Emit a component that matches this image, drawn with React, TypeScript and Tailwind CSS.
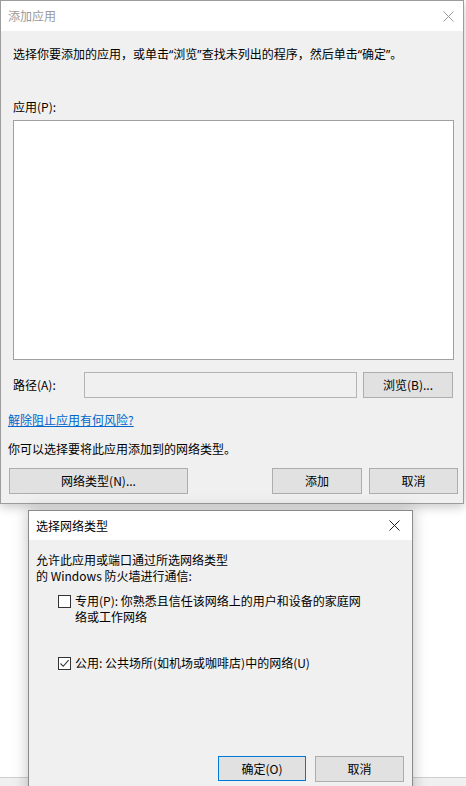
import React from 'react';

const font = "font-['Microsoft_YaHei','Noto_Sans_CJK_SC',sans-serif]";

// thin "×" used in the caption bars
const CloseGlyph = ({ color }: { color: string }) => (
    <svg width="11" height="11" viewBox="0 0 11 11">
        <path d="M0.5 0.5 L10.5 10.5 M10.5 0.5 L0.5 10.5" stroke={color} strokeWidth="1" fill="none" />
    </svg>
);

// curly quotes set in a latin face so they stay narrow
const Q = ({ children }: { children: React.ReactNode }) => (
    <span className="font-['Noto_Sans',sans-serif]">{children}</span>
);

const Button = ({ label, className = '' }: { label: string; className?: string }) => (
    <button className={`h-[26px] bg-[#e1e1e1] border border-[#adadad] text-[12px] leading-[16px] text-black ${className}`}>
        {label}
    </button>
);

const CheckBox = ({ checked }: { checked?: boolean }) => (
    <div className="mt-[2px] w-[13px] h-[13px] shrink-0 bg-white border border-[#333] flex items-center justify-center">
        {checked && (
            <svg width="11" height="11" viewBox="0 0 11 11">
                <path d="M1.5 5.5 L4.2 8.3 L9.6 2.2" stroke="#333" strokeWidth="1.1" fill="none" />
            </svg>
        )}
    </div>
);

const AddAppDialog = () => (
    <div className="absolute left-0 top-0 w-[464px] h-[504px] flex flex-col bg-[#f0f0f0] border border-[#9c9c9c] shadow-[0_3px_10px_rgba(0,0,0,0.22)]">
        <div className="h-[30px] shrink-0 bg-white flex items-center justify-between pl-[7px] pr-[9px]">
            <span className="text-[12px] text-[#9a9a9a]">添加应用</span>
            <CloseGlyph color="#9a9a9a" />
        </div>

        <div className="flex flex-col text-[12px] leading-[16px] text-black">
            <p className="mt-[15px] ml-[12px]">
                选择你要添加的应用，或单击<Q>“</Q>浏览<Q>”</Q>查找未列出的程序，然后单击<Q>“</Q>确定<Q>”</Q>。
            </p>
            <p className="mt-[36px] ml-[12px]">应用(P):</p>

            <div className="mt-[5px] ml-[12px] w-[441px] h-[240px] bg-white border border-[#a0a0a0]"></div>

            <div className="mt-[12px] flex items-center">
                <span className="ml-[12px] w-[71px]">路径(A):</span>
                <div className="w-[273px] h-[26px] border border-[#b4b4b4] bg-[#f0f0f0]"></div>
                <Button label="浏览(B)..." className="ml-[6px] w-[90px]" />
            </div>

            <a className="mt-[14px] ml-[7px] text-[#0066cc] underline">解除阻止应用有何风险?</a>
            <p className="mt-[13px] ml-[7px]">你可以选择要将此应用添加到的网络类型。</p>

            <div className="mt-[11px] flex">
                <Button label="网络类型(N)..." className="ml-[8px] w-[179px]" />
                <Button label="添加" className="ml-[84px] w-[90px]" />
                <Button label="取消" className="ml-[7px] w-[89px]" />
            </div>
        </div>
    </div>
);

const NetworkTypeDialog = () => (
    <div className="absolute left-[28px] top-[510px] w-[385px] h-[300px] flex flex-col bg-[#f0f0f0] border border-[#8a8a8a] shadow-[0_0_14px_rgba(0,0,0,0.25)]">
        <div className="h-[29px] shrink-0 bg-white flex items-center justify-between pl-[7px] pr-[12px]">
            <span className="text-[12px] text-black">选择网络类型</span>
            <CloseGlyph color="#222" />
        </div>

        <div className="flex flex-col text-[12px] leading-[16px] text-black">
            <p className="mt-[12px] ml-[7px]">
                允许此应用或端口通过所选网络类型
                <br />
                的 Windows 防火墙进行通信:
            </p>

            <div className="mt-[9px] ml-[29px] flex items-start gap-[4px]">
                <CheckBox />
                <span>
                    专用(P): 你熟悉且信任该网络上的用户和设备的家庭网
                    <br />
                    络或工作网络
                </span>
            </div>

            <div className="mt-[30px] ml-[29px] flex items-start gap-[4px]">
                <CheckBox checked />
                <span>公用: 公共场所(如机场或咖啡店)中的网络(U)</span>
            </div>

            <div className="mt-[85px] flex">
                <button className="ml-[189px] w-[88px] h-[25px] bg-[#e1e1e1] border border-[#0078d7] text-[12px] text-black">确定(O)</button>
                <Button label="取消" className="ml-[9px] w-[89px] h-[25px]" />
            </div>
        </div>
    </div>
);

export default function App() {
    return (
        <div className={`relative w-[466px] h-[786px] overflow-hidden bg-white ${font}`}>
            {/* window edge peeking out below the dialogs */}
            <div className="absolute left-0 right-0 top-[777px] h-[9px] border-t border-[#cfcfcf] bg-[#f0f0f0]"></div>
            <AddAppDialog />
            <NetworkTypeDialog />
        </div>
    );
}
